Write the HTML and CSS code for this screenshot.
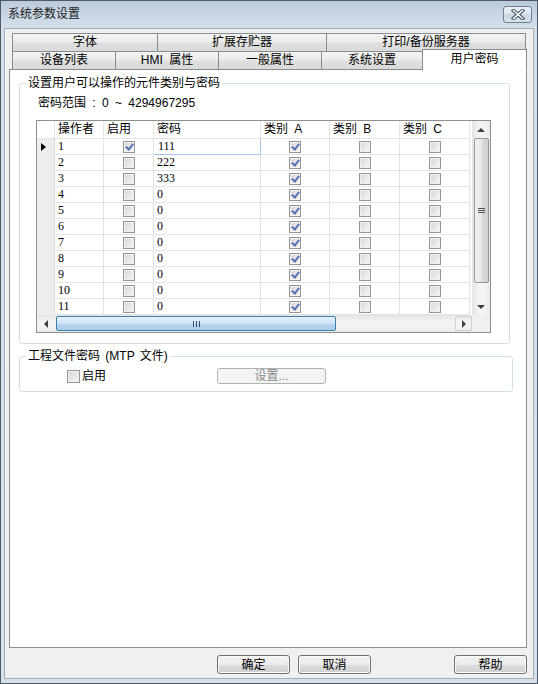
FILE: index.html
```html
<!DOCTYPE html>
<html lang="zh-CN">
<head>
    <meta charset="UTF-8">
    <meta name="viewport" content="width=device-width, initial-scale=1.0">
    <title>系统参数设置</title>
    <link rel="stylesheet" href="styles.css">
</head>
<body>
    <div class="window">
        <div class="titlebar">
            <span class="title">系统参数设置</span>
            <button class="close" type="button" aria-label="关闭">
                <svg width="14" height="11" viewBox="0 0 14 11">
                    <path d="M2.5 1.5 L11.5 9.5 M11.5 1.5 L2.5 9.5" stroke="#3b4a5e" stroke-width="3.6" stroke-linecap="square" fill="none"/>
                    <path d="M2.5 1.5 L11.5 9.5 M11.5 1.5 L2.5 9.5" stroke="#ffffff" stroke-width="1.6" stroke-linecap="square" fill="none"/>
                </svg>
            </button>
        </div>
        <div class="client">
            <div class="tab-row back">
                <div class="tab t-font">字体</div>
                <div class="tab t-ext">扩展存贮器</div>
                <div class="tab t-print">打印/备份服务器</div>
            </div>
            <div class="tab-row front">
                <div class="tab t-small">设备列表</div>
                <div class="tab t-small">HMI 属性</div>
                <div class="tab t-small">一般属性</div>
                <div class="tab t-sys">系统设置</div>
                <div class="tab t-user active">用户密码</div>
            </div>
            <div class="panel">
                <fieldset class="group group-users">
                    <legend>设置用户可以操作的元件类别与密码</legend>
                    <div class="range">密码范围 : 0 ~ 4294967295</div>
                    <div class="grid">
                        <div class="cells">
                            <div class="hd"></div><div class="hd">操作者</div><div class="hd">启用</div><div class="hd">密码</div><div class="hd">类别 A</div><div class="hd">类别 B</div><div class="hd">类别 C</div>

                            <div class="rh cur"></div><div class="num">1</div><div class="mid"><span class="chk on"></span></div><div class="num sel">111</div><div class="mid"><span class="chk on"></span></div><div class="mid"><span class="chk"></span></div><div class="mid"><span class="chk"></span></div>
                            <div class="rh"></div><div class="num">2</div><div class="mid"><span class="chk"></span></div><div class="num">222</div><div class="mid"><span class="chk on"></span></div><div class="mid"><span class="chk"></span></div><div class="mid"><span class="chk"></span></div>
                            <div class="rh"></div><div class="num">3</div><div class="mid"><span class="chk"></span></div><div class="num">333</div><div class="mid"><span class="chk on"></span></div><div class="mid"><span class="chk"></span></div><div class="mid"><span class="chk"></span></div>
                            <div class="rh"></div><div class="num">4</div><div class="mid"><span class="chk"></span></div><div class="num">0</div><div class="mid"><span class="chk on"></span></div><div class="mid"><span class="chk"></span></div><div class="mid"><span class="chk"></span></div>
                            <div class="rh"></div><div class="num">5</div><div class="mid"><span class="chk"></span></div><div class="num">0</div><div class="mid"><span class="chk on"></span></div><div class="mid"><span class="chk"></span></div><div class="mid"><span class="chk"></span></div>
                            <div class="rh"></div><div class="num">6</div><div class="mid"><span class="chk"></span></div><div class="num">0</div><div class="mid"><span class="chk on"></span></div><div class="mid"><span class="chk"></span></div><div class="mid"><span class="chk"></span></div>
                            <div class="rh"></div><div class="num">7</div><div class="mid"><span class="chk"></span></div><div class="num">0</div><div class="mid"><span class="chk on"></span></div><div class="mid"><span class="chk"></span></div><div class="mid"><span class="chk"></span></div>
                            <div class="rh"></div><div class="num">8</div><div class="mid"><span class="chk"></span></div><div class="num">0</div><div class="mid"><span class="chk on"></span></div><div class="mid"><span class="chk"></span></div><div class="mid"><span class="chk"></span></div>
                            <div class="rh"></div><div class="num">9</div><div class="mid"><span class="chk"></span></div><div class="num">0</div><div class="mid"><span class="chk on"></span></div><div class="mid"><span class="chk"></span></div><div class="mid"><span class="chk"></span></div>
                            <div class="rh"></div><div class="num">10</div><div class="mid"><span class="chk"></span></div><div class="num">0</div><div class="mid"><span class="chk on"></span></div><div class="mid"><span class="chk"></span></div><div class="mid"><span class="chk"></span></div>
                            <div class="rh"></div><div class="num">11</div><div class="mid"><span class="chk"></span></div><div class="num">0</div><div class="mid"><span class="chk on"></span></div><div class="mid"><span class="chk"></span></div><div class="mid"><span class="chk"></span></div>
                        </div>
                        <div class="vscroll">
                            <span class="arrow up"></span>
                            <div class="vtrack"><span class="vthumb"></span></div>
                            <span class="arrow down"></span>
                        </div>
                        <div class="hscroll">
                            <span class="arrow left"></span>
                            <div class="htrack"><span class="hthumb"></span></div>
                            <span class="arrow right"></span>
                        </div>
                        <div class="corner"></div>
                    </div>
                </fieldset>
                <fieldset class="group group-file">
                    <legend>工程文件密码 (MTP 文件)</legend>
                    <div class="file-row">
                        <label class="opt"><span class="chk"></span>启用</label>
                        <button class="btn btn-set" type="button" disabled>设置...</button>
                    </div>
                </fieldset>
            </div>
            <div class="actions">
                <button class="btn" type="button">确定</button>
                <button class="btn" type="button">取消</button>
                <button class="btn help" type="button">帮助</button>
            </div>
        </div>
    </div>
</body>
</html>
```

FILE: styles.css
```css
* {
    box-sizing: border-box;
}
body {
    margin: 0;
    font-family: "Liberation Sans", "Noto Sans CJK SC", sans-serif;
    font-size: 12px;
    color: #000;
    background: #d4dfeb;
}
.window {
    width: 538px;
    height: 684px;
    border: 1px solid #4e5b69;
    background: linear-gradient(#bccbdc, #d3dfeb 26px, #d6e1ec);
    padding: 0 3px 4px 3px;
    display: flex;
    flex-direction: column;
}
.titlebar {
    height: 27px;
    display: flex;
    align-items: center;
    justify-content: space-between;
    padding: 0 2px 1px 4px;
}
.title {
    color: #222;
    line-height: 14px;
}
.close {
    width: 29px;
    height: 17px;
    padding: 0;
    border: 1px solid #6e7f93;
    border-radius: 3px;
    background: linear-gradient(#eef2f7, #dde5ee 45%, #ccd7e3 50%, #d8e1ea);
    display: flex;
    align-items: center;
    justify-content: center;
}
.client {
    flex: 1;
    background: #f0f0f0;
    border: 1px solid #a3aebb;
    padding: 4px 6px 4px 4px;
    display: flex;
    flex-direction: column;
}
/* Tabs */
.tab-row {
    display: flex;
    align-items: flex-start;
    margin-left: 3px;
}
.tab-row.front {
    margin-top: -1px;
}
.tab {
    height: 19px;
    border: 1px solid #898c95;
    background: linear-gradient(#f4f4f4, #ebebeb 45%, #dedede 55%, #dadada);
    text-align: center;
    line-height: 17px;
    white-space: nowrap;
    word-spacing: 3px;
}
.tab + .tab {
    margin-left: -1px;
}
.t-font { width: 146px; }
.t-ext { width: 170px; }
.t-print { width: 200px; }
.t-small { width: 104px; }
.t-sys { width: 102px; }
.t-user { width: 105px; }
.tab.active {
    position: relative;
    z-index: 1;
    height: 22px;
    margin-top: -2px;
    margin-bottom: -1px;
    background: #fff;
    border-bottom-color: #fff;
    line-height: 19px;
}
.panel {
    flex: 1;
    margin-top: -1px;
    border: 1px solid #898c95;
    background: #fff;
}
/* Group boxes */
.group {
    border: 1px solid #d5dfe5;
    border-radius: 3px;
    padding: 0;
    min-width: 0;
}
.group legend {
    padding: 0 2px;
    margin-left: 6px;
    line-height: 14px;
    word-spacing: 2px;
}
.group-users {
    width: 491px;
    margin: 6px 0 0 9px;
    padding-bottom: 10px;
}
.group-file {
    width: 494px;
    margin: 5px 0 0 9px;
    padding-bottom: 7px;
}
.range {
    margin: 6px 0 0 18px;
    line-height: 14px;
    word-spacing: 3px;
}
/* Data grid */
.grid {
    width: 455px;
    height: 213px;
    margin: 10px 0 0 16px;
    border: 1px solid #8e8e8e;
    background: #fff;
    display: grid;
    grid-template-columns: 435px 18px;
    grid-template-rows: 194px 17px;
}
.cells {
    display: grid;
    grid-template-columns: 18px 49px 50px 107px 69px 70px 70px;
    grid-template-rows: 18px;
    grid-auto-rows: 16px;
    align-content: start;
}
.cells > div {
    border-right: 1px solid #e3e3e3;
    border-bottom: 1px solid #e3e3e3;
    padding-left: 3px;
    line-height: 15px;
    white-space: nowrap;
    overflow: hidden;
}
.cells > .hd {
    line-height: 17px;
    border-right-color: #e6e6e6;
    word-spacing: 3px;
}
.cells > .rh {
    background: #ededed;
    border-bottom-color: #ededed;
    border-right-color: #d9d9d9;
    display: flex;
    align-items: center;
    padding-left: 4px;
}
.rh.cur::after {
    content: "";
    border-left: 5px solid #000;
    border-top: 4px solid transparent;
    border-bottom: 4px solid transparent;
}
.num {
    font-family: "Liberation Serif", "Noto Sans CJK SC", serif;
    color: #000;
}
.cells > .sel {
    border-right-color: #a4c6ea;
    border-bottom-color: #a4c6ea;
    padding-left: 4px;
}
.cells > .mid {
    display: flex;
    align-items: center;
    justify-content: center;
    padding: 0;
}
.chk {
    position: relative;
    display: inline-block;
    width: 12px;
    height: 12px;
    border: 1px solid #959595;
    background: linear-gradient(135deg, #d6d6d6, #f6f6f6);
    box-shadow: inset 0 0 0 1px #f2f2f2;
}
.chk.on::after {
    content: "";
    position: absolute;
    left: 3px;
    top: 0;
    width: 3px;
    height: 6px;
    border: solid #5a72b4;
    border-width: 0 2px 2px 0;
    transform: rotate(38deg);
}
/* Scroll bars */
.vscroll {
    display: flex;
    flex-direction: column;
    background: linear-gradient(90deg, #e4e4e4, #f4f4f4 40%, #f4f4f4 70%, #eaeaea);
}
.vtrack, .htrack {
    flex: 1;
    display: flex;
}
.vthumb {
    height: 145px;
    flex: 1;
    margin: 0 1px 0 2px;
    border: 1px solid #979797;
    border-radius: 2px;
    background: linear-gradient(90deg, #f2f2f2, #e6e6e6 50%, #d8d8d8 51%, #d0d0d0);
    display: flex;
    align-items: center;
    justify-content: center;
}
.vthumb::after {
    content: "";
    width: 7px;
    height: 5px;
    background: repeating-linear-gradient(#505050 0 1px, transparent 1px 2px);
}
.hscroll {
    display: flex;
    background: linear-gradient(#e4e4e4, #f4f4f4 40%, #f4f4f4 70%, #eaeaea);
}
.hthumb {
    width: 280px;
    margin: 1px 0 1px 1px;
    border: 1px solid #3c7fb1;
    border-radius: 2px;
    background: linear-gradient(#e4f0fb, #d0e4f6 50%, #b8d5ef 51%, #acccea);
    display: flex;
    align-items: center;
    justify-content: center;
}
.hthumb::after {
    content: "";
    width: 7px;
    height: 6px;
    background: repeating-linear-gradient(90deg, #2c4a6e 0 1px, transparent 1px 3px);
}
.arrow {
    display: flex;
    align-items: center;
    justify-content: center;
    height: 17px;
}
.arrow.left {
    width: 18px;
}
.arrow.right {
    width: 17px;
    margin: 1px 0;
    height: 15px;
    border: 1px solid #d0d0d0;
    border-radius: 2px;
}
.arrow.up::before {
    content: "";
    border-left: 4px solid transparent;
    border-right: 4px solid transparent;
    border-bottom: 4px solid #404040;
}
.arrow.down::before {
    content: "";
    border-left: 4px solid transparent;
    border-right: 4px solid transparent;
    border-top: 4px solid #404040;
}
.arrow.left::before {
    content: "";
    border-top: 4px solid transparent;
    border-bottom: 4px solid transparent;
    border-right: 4px solid #404040;
}
.arrow.right::before {
    content: "";
    border-top: 4px solid transparent;
    border-bottom: 4px solid transparent;
    border-left: 4px solid #404040;
}
.corner {
    background: #f0f0f0;
}
/* Project file password */
.file-row {
    display: flex;
    align-items: center;
    height: 16px;
    margin: 5px 0 0 47px;
}
.opt {
    width: 150px;
    display: flex;
    align-items: center;
    gap: 2px;
    line-height: 14px;
}
.opt .chk {
    width: 13px;
    height: 13px;
}
/* Buttons */
.btn {
    width: 73px;
    height: 19px;
    padding: 0;
    border: 1px solid #707070;
    border-radius: 3px;
    background: linear-gradient(#f2f2f2, #ebebeb 50%, #dddddd 51%, #cfcfcf);
    box-shadow: inset 0 0 0 1px #fbfbfb;
    font: inherit;
    color: #000;
    line-height: 16px;
}
.btn:disabled {
    color: #8a8a8a;
    border-color: #adb2b5;
    background: #f4f4f4;
    box-shadow: none;
}
.btn-set {
    width: 109px;
    height: 16px;
    line-height: 13px;
}
.actions {
    display: flex;
    gap: 8px;
    margin-top: 7px;
    padding-left: 208px;
}
.actions .help {
    margin-left: auto;
}
```
